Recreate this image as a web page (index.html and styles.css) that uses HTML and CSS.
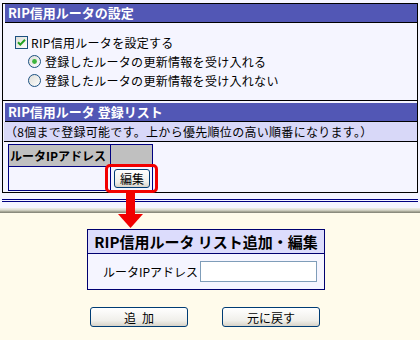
FILE: index.html
```html
<!DOCTYPE html>
<html lang="ja">
<head>
  <meta charset="UTF-8">
  <title>RIP信用ルータの設定</title>
  <link rel="stylesheet" href="styles.css">
</head>
<body>
  <div class="page">
    <div class="panel">
      <div class="bar">RIP信用ルータの設定</div>
      <div class="opts">
        <div class="opt">
          <svg class="chk" width="13" height="13" viewBox="0 0 13 13">
            <defs><linearGradient id="g1" x1="0" y1="0" x2="1" y2="1"><stop offset="0" stop-color="#dcdcd6"/><stop offset="1" stop-color="#ffffff"/></linearGradient></defs>
            <rect x="0.5" y="0.5" width="12" height="12" fill="url(#g1)" stroke="#1c5180"/>
            <path d="M3 6.2 L5.3 8.6 L10 3.8" fill="none" stroke="#21a121" stroke-width="2"/>
          </svg>RIP信用ルータを設定する
        </div>
        <div class="opt sub">
          <svg class="rad" width="13" height="13" viewBox="0 0 13 13">
            <circle cx="6.5" cy="6.5" r="6" fill="url(#g1)" stroke="#1c5180"/>
            <circle cx="6.5" cy="6.5" r="2.4" fill="#3cb43c"/>
          </svg>登録したルータの更新情報を受け入れる
        </div>
        <div class="opt sub">
          <svg class="rad" width="13" height="13" viewBox="0 0 13 13">
            <circle cx="6.5" cy="6.5" r="6" fill="url(#g1)" stroke="#1c5180"/>
          </svg>登録したルータの更新情報を受け入れない
        </div>
      </div>
      <div class="bar bar2">RIP信用ルータ 登録リスト</div>
      <div class="note">（8個まで登録可能です。上から優先順位の高い順番になります。）</div>
      <div class="list">
        <div class="tbl">
          <div class="th">ルータIPアドレス</div>
          <div class="th"></div>
          <div class="td"></div>
          <div class="td"><button class="btn-edit">編集</button></div>
        </div>
      </div>
    </div>
    <div class="rule"></div>
    <div class="mark"></div>
    <svg class="arrow" width="27" height="37" viewBox="0 0 27 37">
      <rect x="9" y="0" width="9" height="23" fill="#f20000"/>
      <polygon points="1,22 26,22 13.5,36" fill="#f20000"/>
    </svg>
  </div>
  <div class="frame"></div>
  <div class="popup">
    <div class="dlg">
      <div class="dlg-title">RIP信用ルータ リスト追加・編集</div>
      <div class="dlg-body">
        <span>ルータIPアドレス</span>
        <input class="ip" type="text">
      </div>
    </div>
    <div class="actions">
      <button class="btn">追&ensp;加</button>
      <button class="btn">元に戻す</button>
    </div>
  </div>
</body>
</html>
```

FILE: styles.css
```css
body {
  margin: 0;
  font-family: "Noto Sans CJK JP", "Noto Sans", sans-serif;
  font-size: 12px;
  color: #000;
  background: #fffbeb;
}
.page {
  position: relative;
  height: 208px;
  box-sizing: border-box;
  padding: 3px 2px 0;
  background: #f5f5ff;
}
.panel { border: 1px solid #000; }
.bar {
  height: 18px; line-height: 18px; margin-left: 2px; padding-left: 3px;
  background: #5257b5; color: #fff; font-size: 13px; font-weight: bold;
  border-bottom: 1px solid #000;
}
.bar2 { margin-top: 2px; }
.opts { padding: 10px 12px; border-bottom: 1px solid #000; }
.opt {
  display: flex; align-items: center; height: 19px;
  white-space: nowrap; letter-spacing: 0.3px;
}
.opt.sub { padding-left: 13px; }
.chk { margin-right: 3px; flex: none; }
.rad { margin-right: 4px; flex: none; }
.note {
  height: 19px; line-height: 19px; margin-left: 1px; padding-left: 1px;
  background: #d8d8f8; border-bottom: 1px solid #000;
  white-space: nowrap; letter-spacing: 0.3px;
}
.list { padding: 2px 0 1px 5px; }
.tbl {
  display: grid;
  grid-template-columns: 101px 41px;
  grid-template-rows: 21px 23px;
  gap: 1px;
  width: max-content;
  background: #000080;
  border: 1px solid #000080;
}
.th {
  background: #c0c0c0; font-weight: bold; font-size: 12px;
  line-height: 21px; padding-left: 1px; white-space: nowrap; overflow: hidden;
}
.td { background: #f5f5ff; }
.btn-edit {
  display: block; width: 36px; height: 19px; margin: 2px 0 0 3px; padding: 0;
  font: 12px "Noto Sans CJK JP", sans-serif;
  border: 1px solid #003c74; border-radius: 3px;
  background: linear-gradient(#ffffff, #f0efea 70%, #d8d3c8);
}
.rule {
  height: 1px; margin-top: 6px;
  border-top: 1px solid #000080; border-bottom: 1px solid #000080;
}
.mark {
  position: absolute; left: 105px; top: 164px; width: 53px; height: 29px;
  box-sizing: border-box; border: 3px solid #f20000; border-radius: 5px;
}
.arrow { position: absolute; left: 117px; top: 192px; z-index: 1; }
.frame {
  height: 5px;
  background: linear-gradient(#f0f0e8, #dadace 40%, #a8a898 70%, #7c7c70);
}
.popup { padding-top: 16px; }
.dlg {
  width: 238px; margin-left: 87px; box-sizing: border-box;
  border: 1px solid #000070;
}
.dlg-title {
  height: 23px; line-height: 23px; text-align: center;
  background: #dcdcfc; font-size: 15px; font-weight: bold;
  border-bottom: 1px solid #000070; white-space: nowrap;
}
.dlg-body {
  display: flex; align-items: center; height: 35px; padding-left: 15px;
  background: #f5f5ff;
}
.ip {
  width: 117px; height: 21px; margin-left: 2px; box-sizing: border-box;
  border: 1px solid #7f9db9; background: #fff; padding: 0 2px;
}
.actions { display: flex; gap: 34px; margin: 17px 0 0 90px; }
.btn {
  width: 98px; height: 20px; padding: 0;
  font: 12px "Noto Sans CJK JP", sans-serif;
  border: 1px solid #003c74; border-radius: 3px;
  background: linear-gradient(#ffffff, #f0efea 70%, #d8d3c8);
}
```
